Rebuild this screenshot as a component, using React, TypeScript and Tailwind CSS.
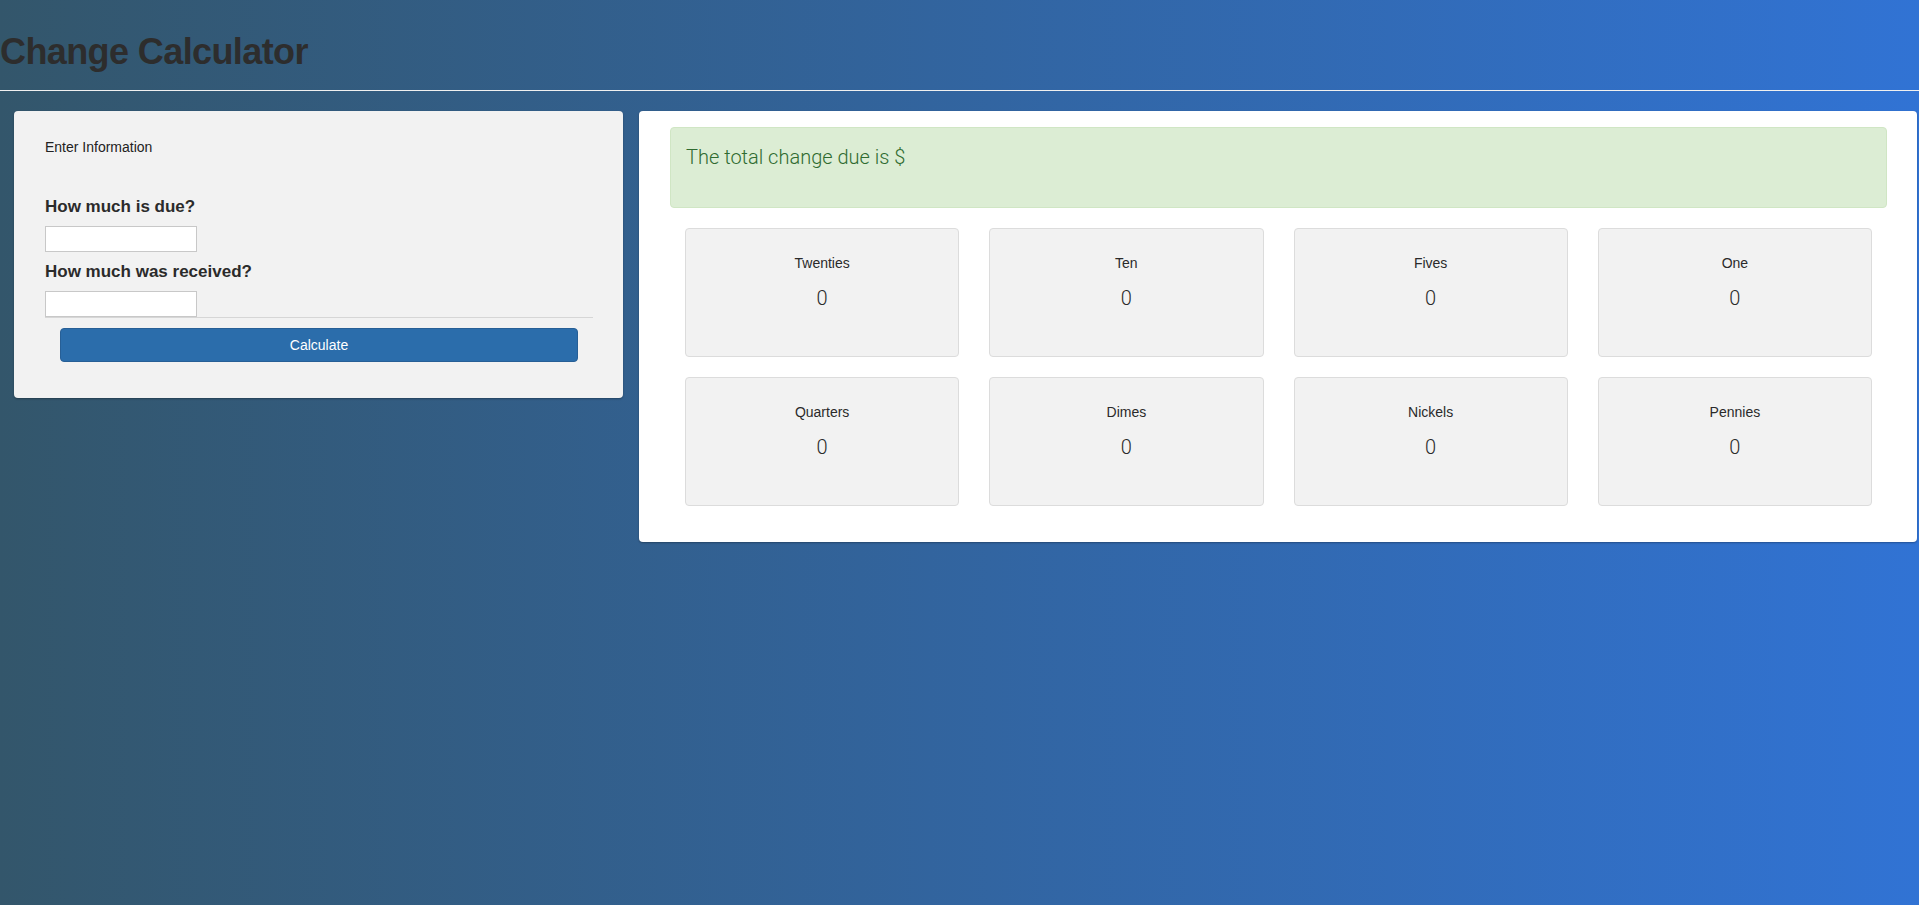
import React from "react";

// Denominations shown in the result grid
const bills = ["Twenties", "Ten", "Fives", "One"];
const coins = ["Quarters", "Dimes", "Nickels", "Pennies"];

const CountCard = ({ label }: { label: string }) => {
  return (
    <div className="h-[129px] bg-[#f2f2f2] border border-[#dcdcdc] rounded-[4px] text-center pt-[24px]">
      <div className="text-[14px] leading-[20px] text-[#2a2a2a]">{label}</div>
      <div className="mt-[11px] text-[20px] leading-[28px] font-light text-[#2a2a2a] font-['Roboto',sans-serif]">0</div>
    </div>
  );
};

const App = () => {
  return (
    <div className="min-h-screen bg-[linear-gradient(to_right,#33566b,#3173d4)] font-['Liberation_Sans',Arial,sans-serif] text-[#333]">
      <h1 className="pt-[32px] text-[36px] leading-[40px] font-bold tracking-[-0.6px] text-[#2d2d2d]">Change Calculator</h1>
      <hr className="mt-[18px] border-0 border-t border-[#f0f0f0]" />

      <div className="flex items-start mt-[20px] pl-[14px] gap-[16px]">
        {/* input panel */}
        <div className="w-[609px] bg-[#f2f2f2] rounded-[4px] shadow-[0_1px_2px_rgba(0,0,0,0.3)] pl-[31px] pr-[30px] pt-[26px] pb-[36px]">
          <div className="border-b border-[#d6d6d6]">
            <p className="text-[14px] leading-[20px] text-[#222]">Enter Information</p>
            <h4 className="mt-[40px] text-[17px] leading-[20px] font-bold text-[#2b2b2b]">How much is due?</h4>
            <input type="text" className="block mt-[9px] h-[26px] w-[152px] bg-white border border-[#c8c8c8] outline-none" />
            <h4 className="mt-[10px] text-[17px] leading-[20px] font-bold text-[#2b2b2b]">How much was received?</h4>
            <input type="text" className="block mt-[9px] h-[26px] w-[152px] bg-white border border-[#c8c8c8] outline-none" />
          </div>
          <div className="px-[15px] mt-[10px]">
            <button className="w-full h-[34px] bg-[#2b6dab] border border-[#275f96] rounded-[4px] text-white text-[14px]">Calculate</button>
          </div>
        </div>

        {/* result panel */}
        <div className="w-[1278px] bg-white rounded-[4px] shadow-[0_1px_2px_rgba(0,0,0,0.3)] pl-[31px] pr-[30px] pt-[16px] pb-[36px]">
          <div className="h-[81px] bg-[#dcedd4] border border-[#d0e6c4] rounded-[4px] px-[15px] pt-[15px]">
            <p className="text-[20px] leading-[28px] font-light text-[#2f6b30] font-['Roboto',sans-serif]">The total change due is $</p>
          </div>
          <div className="grid grid-cols-4 gap-x-[30px] gap-y-[20px] mt-[20px] px-[15px]">
            {bills.map((b) => (
              <CountCard key={b} label={b} />
            ))}
            {coins.map((c) => (
              <CountCard key={c} label={c} />
            ))}
          </div>
        </div>
      </div>
    </div>
  );
};

export default App;
